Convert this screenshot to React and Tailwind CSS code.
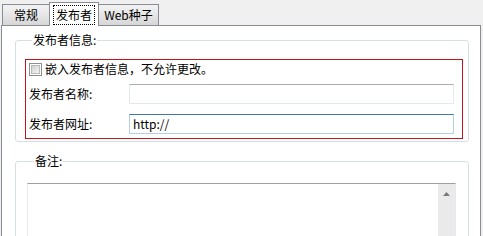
import React from 'react';

const font = { fontFamily: '"Noto Sans CJK SC", "Noto Sans", sans-serif' };

function Tab({ label, active, className }) {
    if (active) {
        return (
            <div className={`relative z-10 h-[24px] -mb-px bg-white border border-b-0 border-[#898c95] flex items-start justify-center pt-[2px] ${className}`}>
                <div className="h-[20px] px-[2px] flex items-center border border-dotted border-black leading-none">{label}</div>
            </div>
        );
    }
    return (
        <div className={`h-[21px] bg-gradient-to-b from-[#f3f3f3] via-[#e6e6e6] to-[#d6d6d6] border border-b-0 border-[#898c95] flex items-center justify-center leading-none ${className}`}>
            {label}
        </div>
    );
}

function Checkbox() {
    return (
        <div className="w-[13px] h-[13px] border border-[#8e8f8f] bg-white p-[1px] shrink-0">
            <div className="w-full h-full bg-gradient-to-br from-[#cfcfcf] to-[#f6f6f6] border border-[#b9b9b9]" />
        </div>
    );
}

export default function App() {
    return (
        <div className="w-[483px] h-[236px] bg-[#f0f0f0] overflow-hidden flex flex-col text-[12px] text-black" style={font}>
            <div className="flex items-end h-[25px] pl-[2px]">
                <Tab label="常规" className="w-[48px]" />
                <Tab label="发布者" active className="-ml-px w-[50px]" />
                <Tab label="Web种子" className="-ml-px w-[61px]" />
            </div>

            <div className="ml-[1px] w-[480px] flex-1 bg-white border border-b-0 border-[#898c95] overflow-hidden">
                <fieldset className="ml-[13px] mt-[6px] w-[454px] border border-[#d5dfe5] rounded-[3px] pl-[9px] pb-[2px]">
                    <legend className="ml-[7px] px-[1px] leading-[16px]">发布者信息:</legend>
                    <div className="mt-[11px] w-[438px] border border-[#c0151b] pt-[1px] pb-[4px]">
                        <div className="h-[16px] flex items-center pl-[3px] gap-[3px]">
                            <Checkbox />
                            <span className="leading-none">嵌入发布者信息，不允许更改。</span>
                        </div>
                        <div className="mt-[7px] flex items-center pl-[3px]">
                            <span className="w-[100px] leading-none">发布者名称:</span>
                            <div className="w-[325px] h-[20px] border border-[#e3e9ef] border-t-[#abadb3] bg-white" />
                        </div>
                        <div className="mt-[10px] flex items-center pl-[3px]">
                            <span className="w-[100px] leading-none">发布者网址:</span>
                            <div className="w-[325px] h-[20px] border border-[#b5cfe7] border-t-[#3d7bad] bg-white flex items-center pl-[3px] leading-none">
                                http://
                            </div>
                        </div>
                    </div>
                </fieldset>

                <fieldset className="ml-[13px] mt-[11px] w-[454px] h-[120px] border border-[#d5dfe5] rounded-[3px] pl-[11px]">
                    <legend className="ml-[7px] px-[1px] leading-[16px]">备注:</legend>
                    <div className="mt-[14px] w-[429px] h-[80px] border border-[#e3e9ef] border-t-[#a0a0a0] flex justify-end">
                        <div className="w-[17px] h-full bg-[#eaeaea] flex justify-center pt-[8px]">
                            <svg width="7" height="4" viewBox="0 0 7 4">
                                <path d="M0 4 L3.5 0 L7 4 Z" fill="#7a7a7a" />
                            </svg>
                        </div>
                    </div>
                </fieldset>
            </div>
        </div>
    );
}
